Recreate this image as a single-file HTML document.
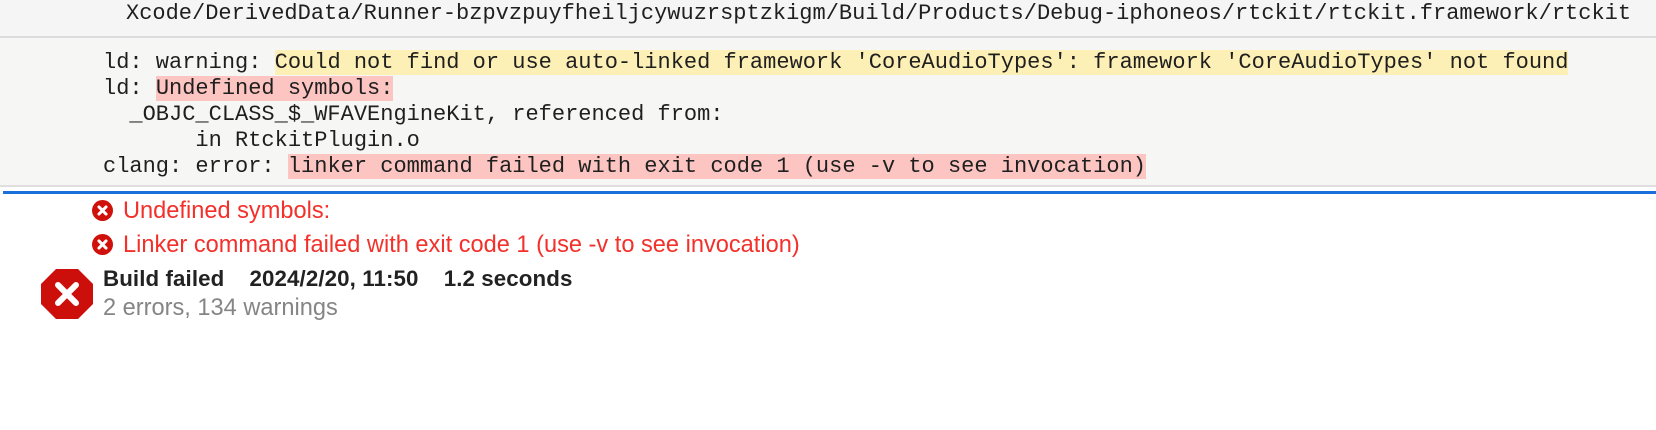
<!DOCTYPE html>
<html><head><meta charset="utf-8"><style>
body{margin:0;width:1656px;height:430px;background:#fff;overflow:hidden;position:relative;font-family:"Liberation Sans",sans-serif}
.top{position:absolute;left:0;top:0;width:1656px;height:36px;background:#f5f5f5;border-bottom:2px solid #dcdcdc}
.mono{font-family:"Liberation Mono",monospace;font-size:22px;color:#1f1f1f;white-space:pre}
.top .mono{position:absolute;left:126px;top:0;line-height:28px}
.log{position:absolute;left:0;top:38px;width:1656px;height:147px;background:#f6f6f5;border-bottom:2px solid #dedede}
.log .mono{position:absolute;left:103px;top:12px;line-height:26px}
.y{background:#fdf0b6}.p{background:#fcc5c2}
.blue{position:absolute;left:3px;top:191px;width:1653px;height:3px;background:#1a6fdc}
.err{position:absolute;left:123px;color:#f3302a;font-size:23.6px;line-height:28px}
.ic{position:absolute;width:21px;height:21px;border-radius:50%;background:#d0100b}
.ic:before,.ic:after{content:"";position:absolute;left:4px;top:9px;width:13px;height:3px;background:#fff;border-radius:2px;transform:rotate(45deg)}
.ic:after{transform:rotate(-45deg)}
.bold{position:absolute;left:103px;top:266px;font-weight:bold;font-size:22.3px;color:#222;white-space:pre;line-height:26px;letter-spacing:0.1px}
.gray{position:absolute;left:103px;top:295px;font-size:23.6px;color:#858585;line-height:26px}
</style></head><body>
<div class="top"><div class="mono">Xcode/DerivedData/Runner-bzpvzpuyfheiljcywuzrsptzkigm/Build/Products/Debug-iphoneos/rtckit/rtckit.framework/rtckit</div></div>
<div class="log"><div class="mono">ld: warning: <span class="y">Could not find or use auto-linked framework 'CoreAudioTypes': framework 'CoreAudioTypes' not found</span>
ld: <span class="p">Undefined symbols:</span>
  _OBJC_CLASS_$_WFAVEngineKit, referenced from:
       in RtckitPlugin.o
clang: error: <span class="p">linker command failed with exit code 1 (use -v to see invocation)</span></div></div>
<div class="blue"></div>
<div class="ic" style="left:92px;top:200px"></div>
<div class="err" style="top:197px">Undefined symbols:</div>
<div class="ic" style="left:92px;top:234px"></div>
<div class="err" style="top:231px">Linker command failed with exit code 1 (use -v to see invocation)</div>
<svg style="position:absolute;left:41px;top:269px" width="52" height="50" viewBox="0 0 52 50">
<polygon points="15,0 37,0 52,15 52,35 37,50 15,50 0,35 0,15" fill="#cc0f0b"/>
<path d="M17 16 L35 34 M35 16 L17 34" stroke="#fff" stroke-width="6" stroke-linecap="round"/>
</svg>
<div class="bold">Build failed    2024/2/20, 11:50    1.2 seconds</div>
<div class="gray">2 errors, 134 warnings</div>
</body></html>
